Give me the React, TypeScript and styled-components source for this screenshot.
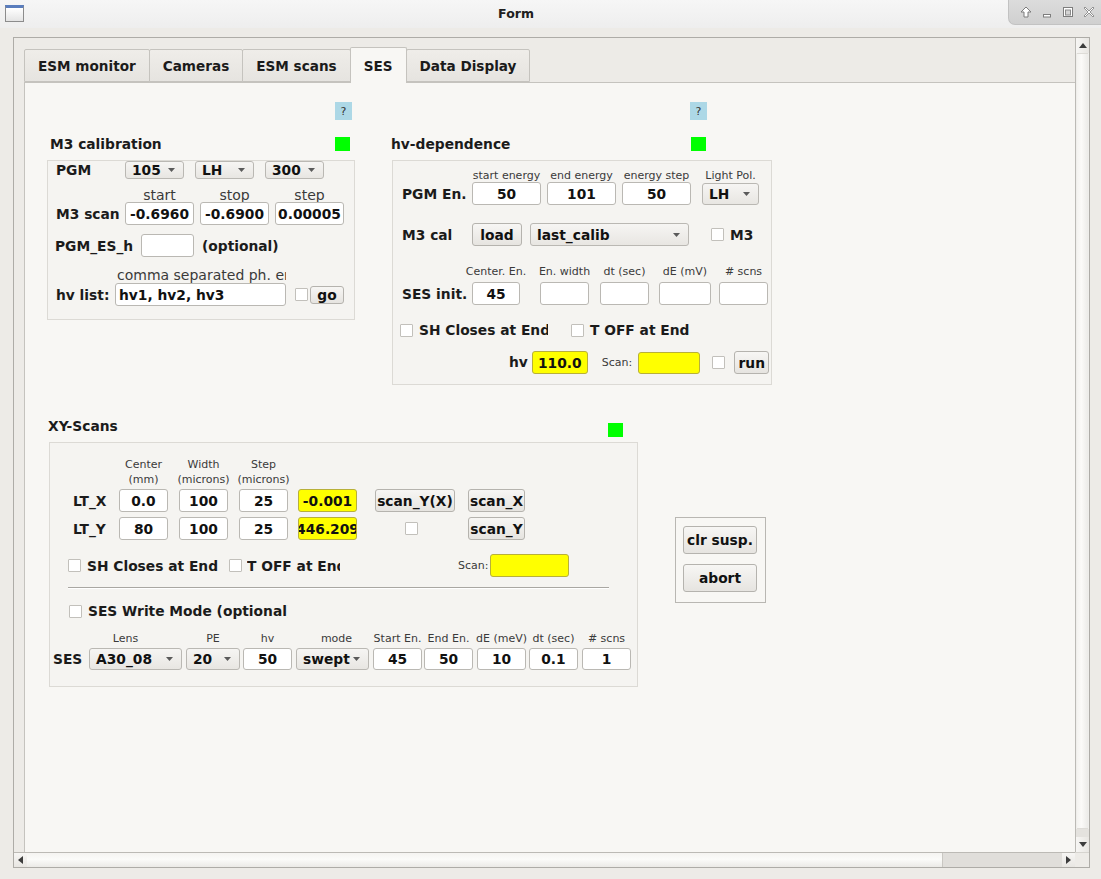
import React from "react";
import styled, { createGlobalStyle, css } from "styled-components";

const FONT = `"DejaVu Sans", "Liberation Sans", sans-serif`;

const Global = createGlobalStyle`
  html, body { margin: 0; padding: 0; background: #edebe7; }
  body { font-family: ${FONT}; color: #1b1b1b; }
  * { box-sizing: border-box; }
`;

type MLProps = { $ml?: number };
const ml = css<MLProps>`
  margin-left: ${(p) => (p.$ml ? `${p.$ml}px` : "0")};
`;

/* ---------- window chrome ---------- */
const Window = styled.div`
  width: 1101px;
  height: 879px;
  display: flex;
  flex-direction: column;
  background: #edebe7;
  overflow: hidden;
`;

const TitleBar = styled.div`
  height: 28px;
  flex: none;
  display: flex;
  align-items: flex-start;
  background: linear-gradient(#f6f6f6, #eeeeee);
`;

const AppIcon = styled.div`
  width: 19px;
  height: 17px;
  margin: 5px 0 0 5px;
  border: 1px solid #8c8c8c;
  border-top: 3px solid #5a7dbd;
  background: linear-gradient(#ffffff, #e4e4e4);
  flex: none;
`;

const Title = styled.div`
  flex: 1;
  text-align: center;
  font: bold 12.5px ${FONT};
  line-height: 28px;
  color: #202020;
`;

const WinButtons = styled.div`
  width: 93px;
  height: 25px;
  flex: none;
  display: flex;
  align-items: center;
  justify-content: space-around;
  padding: 0 2px 0 6px;
  background: linear-gradient(#dcdcdc, #d0d0d0);
  border-left: 1px solid #c2c2c2;
  border-bottom: 1px solid #c2c2c2;
  border-bottom-left-radius: 7px;
`;

const Body = styled.div`
  flex: 1;
  padding: 9px 11px 0 13px;
`;

const ScrollArea = styled.div`
  width: 1077px;
  height: 831px;
  border: 1px solid #aeaca7;
  display: grid;
  grid-template-columns: 1fr 14px;
  grid-template-rows: 1fr 15px;
  overflow: hidden;
`;

const Viewport = styled.div`
  overflow: hidden;
  padding: 9px 0 0 10px;
  background: #edebe7;
`;

const VScroll = styled.div`
  display: flex;
  flex-direction: column;
  border-left: 1px solid #bcbab5;
  background: #efeeeb;
`;

const HScroll = styled.div`
  display: flex;
  border-top: 1px solid #bcbab5;
  background: #e1dfdb;
`;

const Corner = styled.div`
  background: #edebe7;
  border-top: 1px solid #d6d4cf;
`;

const ArrowBtn = styled.div<{ $v?: boolean }>`
  flex: none;
  width: ${(p) => (p.$v ? "auto" : "13px")};
  height: ${(p) => (p.$v ? "15px" : "auto")};
  display: flex;
  align-items: center;
  justify-content: center;
  background: linear-gradient(${(p) => (p.$v ? "90deg" : "180deg")}, #f7f6f4, #e8e6e2);
`;

const VThumb = styled.div`
  flex: 1;
  margin: 0 1px;
  background: linear-gradient(90deg, #f4f3f0, #fbfaf8 40%, #ecebe8);
  border-top: 1px solid #dedcd7;
  border-bottom: 1px solid #dedcd7;
`;

const VTrack = styled.div`
  height: 8px;
  flex: none;
  background: #e4e2de;
`;

const HThumb = styled.div`
  width: 916px;
  flex: none;
  background: linear-gradient(#f5f4f1, #fbfbf9 45%, #ebeae6);
  border-right: 1px solid #c9c7c2;
`;

const HTrack = styled.div`
  flex: 1;
  background: #e0deda;
`;

/* ---------- tabs ---------- */
const TabBar = styled.div`
  display: flex;
  align-items: flex-end;
  height: 35px;
`;

const Tab = styled.div<{ $active?: boolean }>`
  height: ${(p) => (p.$active ? "36px" : "33px")};
  margin-left: -1px;
  margin-bottom: ${(p) => (p.$active ? "-1px" : "0")};
  padding: 0 13px;
  display: flex;
  align-items: center;
  font: bold 13.6px ${FONT};
  color: #1b1b1b;
  border: 1px solid #c5c3be;
  border-bottom: ${(p) => (p.$active ? "none" : "1px solid #c5c3be")};
  border-radius: 2px 2px 0 0;
  background: ${(p) => (p.$active ? "#f8f7f4" : "linear-gradient(#efede9, #e6e4e0)")};
  position: relative;
  z-index: ${(p) => (p.$active ? 1 : 0)};
  &:first-child { margin-left: 0; }
`;

const Panel = styled.div`
  width: 1100px;
  height: 820px;
  border: 1px solid #c5c3be;
  background: #f8f7f4;
`;

/* ---------- layout ---------- */
const TopSection = styled.div`
  display: flex;
  align-items: flex-start;
`;

const Col = styled.div<{ $ml: number; $w: number }>`
  margin-left: ${(p) => p.$ml}px;
  width: ${(p) => p.$w}px;
  display: flex;
  flex-direction: column;
  flex: none;
`;

const HelpRow = styled.div<{ $mt: number; $pr: number }>`
  margin-top: ${(p) => p.$mt}px;
  display: flex;
  justify-content: flex-end;
  padding-right: ${(p) => p.$pr}px;
`;

const HelpBtn = styled.div`
  width: 17px;
  height: 18px;
  background: #add8e6;
  font: 11px ${FONT};
  color: #333;
  display: flex;
  align-items: center;
  justify-content: center;
`;

const HeadRow = styled.div<{ $mt: number; $pl: number; $pr: number; $h: number }>`
  margin-top: ${(p) => p.$mt}px;
  height: ${(p) => p.$h}px;
  padding-left: ${(p) => p.$pl}px;
  padding-right: ${(p) => p.$pr}px;
  display: flex;
  justify-content: space-between;
  align-items: flex-start;
`;

const Heading = styled.div`
  font: bold 13.8px ${FONT};
  line-height: 14px;
  white-space: nowrap;
`;

const Led = styled.div<{ $end?: boolean }>`
  width: 15px;
  height: 14px;
  background: #00ff00;
  align-self: ${(p) => (p.$end ? "flex-end" : "flex-start")};
`;

const Box = styled.div<{ $mt: number; $ml?: number; $w: number; $h: number }>`
  margin-top: ${(p) => p.$mt}px;
  margin-left: ${(p) => p.$ml ?? 0}px;
  width: ${(p) => p.$w}px;
  height: ${(p) => p.$h}px;
  border: 1px solid #dcdad5;
  background: #f5f4f1;
  display: flex;
  flex-direction: column;
  flex: none;
`;

const BottomSection = styled.div`
  margin-top: 34px;
  display: flex;
  align-items: flex-start;
`;

const SideBox = styled.div`
  margin-left: 37px;
  margin-top: 98px;
  width: 91px;
  height: 86px;
  border: 1px solid #b9b7b2;
  padding: 8px 0 0 7px;
  display: flex;
  flex-direction: column;
  gap: 10px;
  flex: none;
`;

const Row = styled.div<{ $mt?: number; $pl?: number; $h: number; $top?: boolean }>`
  margin-top: ${(p) => p.$mt ?? 0}px;
  padding-left: ${(p) => p.$pl ?? 0}px;
  height: ${(p) => p.$h}px;
  display: flex;
  align-items: ${(p) => (p.$top ? "flex-start" : "center")};
  flex: none;
`;

const HLine = styled.div<{ $mt: number; $ml: number; $w: number }>`
  margin-top: ${(p) => p.$mt}px;
  margin-left: ${(p) => p.$ml}px;
  width: ${(p) => p.$w}px;
  height: 2px;
  border-top: 1px solid #a9a7a2;
  border-bottom: 1px solid #ffffff;
  flex: none;
`;

/* ---------- widgets ---------- */
const Label = styled.div<MLProps & { $w?: number; $clip?: boolean; $raise?: number }>`
  ${ml};
  width: ${(p) => (p.$w ? `${p.$w}px` : "auto")};
  flex: none;
  font: bold 13.8px ${FONT};
  line-height: 16px;
  margin-bottom: ${(p) => (p.$raise ? `${p.$raise * 2}px` : "0")};
  white-space: nowrap;
  overflow: ${(p) => (p.$clip ? "hidden" : "visible")};
  color: #1b1b1b;
`;

const Note = styled.div<MLProps & { $w?: number; $size?: number; $pl?: number }>`
  ${ml};
  width: ${(p) => (p.$w ? `${p.$w}px` : "auto")};
  padding-left: ${(p) => p.$pl ?? 0}px;
  flex: none;
  font: ${(p) => p.$size ?? 14}px ${FONT};
  line-height: 15px;
  white-space: nowrap;
  overflow: hidden;
  color: #3a3a3a;
`;

const Cell = styled.div<MLProps & { $w: number; $size?: number; $pl?: number; $pr?: number }>`
  ${ml};
  width: ${(p) => p.$w}px;
  padding-left: ${(p) => p.$pl ?? 0}px;
  padding-right: ${(p) => p.$pr ?? 0}px;
  flex: none;
  display: flex;
  flex-direction: column;
  align-items: center;
  font: ${(p) => p.$size ?? 11}px ${FONT};
  line-height: ${(p) => ((p.$size ?? 11) > 12 ? 14 : 15)}px;
  white-space: nowrap;
  color: #3a3a3a;
`;

const Field = styled.div<MLProps & { $w: number; $h?: number; $yellow?: boolean; $left?: boolean }>`
  ${ml};
  width: ${(p) => p.$w}px;
  height: ${(p) => p.$h ?? 23}px;
  flex: none;
  display: flex;
  align-items: center;
  justify-content: ${(p) => (p.$left ? "flex-start" : "center")};
  padding-left: ${(p) => (p.$left ? 3 : 0)}px;
  background: ${(p) => (p.$yellow ? "#ffff00" : "#ffffff")};
  border: 1px solid ${(p) => (p.$yellow ? "#b8b03a" : "#bab8b3")};
  border-radius: 3px;
  overflow: hidden;
  white-space: nowrap;
  font: bold 13.8px ${FONT};
  color: #111;
  & > span { flex: none; }
`;

const ComboBox = styled.div<MLProps & { $w: number; $h?: number }>`
  ${ml};
  width: ${(p) => p.$w}px;
  height: ${(p) => p.$h ?? 22}px;
  flex: none;
  display: flex;
  align-items: center;
  justify-content: space-between;
  padding: 0 8px 0 6px;
  background: linear-gradient(#f6f5f3, #e8e6e2);
  border: 1px solid #bab8b3;
  border-radius: 3px;
  font: bold 13.8px ${FONT};
  color: #111;
  white-space: nowrap;
`;

const Btn = styled.div<MLProps & { $w: number; $h?: number }>`
  ${ml};
  width: ${(p) => p.$w}px;
  height: ${(p) => p.$h ?? 23}px;
  flex: none;
  display: flex;
  align-items: center;
  justify-content: center;
  background: linear-gradient(#f7f6f4, #e6e4e0);
  border: 1px solid #b5b3ae;
  border-radius: 3px;
  font: bold 13.8px ${FONT};
  color: #111;
  white-space: nowrap;
`;

const Check = styled.div<MLProps>`
  ${ml};
  width: 13px;
  height: 13px;
  flex: none;
  background: #ffffff;
  border: 1px solid #c2c0bb;
  border-radius: 1px;
`;

const Arrow = () => (
  <svg width="7" height="4" viewBox="0 0 7 4">
    <path d="M0 0 L7 0 L3.5 4 Z" fill="#5a5a5a" />
  </svg>
);

const Combo = ({ children, ...rest }: { children: React.ReactNode; $w: number; $h?: number; $ml?: number }) => (
  <ComboBox {...rest}>
    <span>{children}</span>
    <Arrow />
  </ComboBox>
);

const Tri = ({ dir }: { dir: "up" | "down" | "left" | "right" }) => {
  const d = {
    up: "M0 5 L4 0 L8 5 Z",
    down: "M0 0 L8 0 L4 5 Z",
    left: "M5 0 L5 8 L0 4 Z",
    right: "M0 0 L5 4 L0 8 Z",
  }[dir];
  const v = dir === "up" || dir === "down";
  return (
    <svg width={v ? 8 : 5} height={v ? 5 : 8} viewBox={v ? "0 0 8 5" : "0 0 5 8"}>
      <path d={d} fill="#3c3c3c" />
    </svg>
  );
};

const WinIcon = ({ kind }: { kind: "up" | "min" | "max" | "close" }) => (
  <svg width="12" height="12" viewBox="0 0 12 12">
    {kind === "up" && (
      <path d="M6 1 L11 6 L8 6 L8 11 L4 11 L4 6 L1 6 Z" fill="#fff" stroke="#7d7d7d" strokeWidth="1" />
    )}
    {kind === "min" && <rect x="2.5" y="8.5" width="7" height="2.5" fill="#fff" stroke="#7d7d7d" />}
    {kind === "max" && (
      <g>
        <rect x="1.5" y="1.5" width="9" height="9" fill="#fff" stroke="#7d7d7d" />
        <rect x="3.5" y="4" width="5" height="5" fill="#d4d4d4" stroke="#8a8a8a" />
      </g>
    )}
    {kind === "close" && (
      <path d="M2 1 L6 5 L10 1 L11 2 L7 6 L11 10 L10 11 L6 7 L2 11 L1 10 L5 6 L1 2 Z" fill="#fff" stroke="#7d7d7d" strokeWidth="0.8" />
    )}
  </svg>
);

export default function App() {
  return (
    <>
      <Global />
      <Window>
        <TitleBar>
          <AppIcon />
          <Title>Form</Title>
          <WinButtons>
            <WinIcon kind="up" />
            <WinIcon kind="min" />
            <WinIcon kind="max" />
            <WinIcon kind="close" />
          </WinButtons>
        </TitleBar>
        <Body>
          <ScrollArea>
            <Viewport>
              <TabBar>
                <Tab>ESM monitor</Tab>
                <Tab>Cameras</Tab>
                <Tab>ESM scans</Tab>
                <Tab $active>SES</Tab>
                <Tab>Data Display</Tab>
              </TabBar>
              <Panel>
                <TopSection>
                  {/* M3 calibration */}
                  <Col $ml={22} $w={308}>
                    <HelpRow $mt={19} $pr={3}>
                      <HelpBtn>?</HelpBtn>
                    </HelpRow>
                    <HeadRow $mt={17} $h={14} $pl={3} $pr={5}>
                      <Heading>M3 calibration</Heading>
                      <Led />
                    </HeadRow>
                    <Box $mt={9} $w={308} $h={160}>
                      <Row $h={18} $pl={8}>
                        <Label $w={69}>PGM</Label>
                        <Combo $w={59} $h={18}>105</Combo>
                        <Combo $w={59} $h={18} $ml={11}>LH</Combo>
                        <Combo $w={59} $h={18} $ml={11}>300</Combo>
                      </Row>
                      <Row $mt={9} $h={14} $pl={77}>
                        <Cell $w={69} $size={14}>start</Cell>
                        <Cell $w={69} $size={14} $ml={6}>stop</Cell>
                        <Cell $w={69} $size={14} $ml={6}>step</Cell>
                      </Row>
                      <Row $h={23} $pl={8}>
                        <Label $w={69}>M3 scan</Label>
                        <Field $w={69}>-0.6960</Field>
                        <Field $w={69} $ml={6}>-0.6900</Field>
                        <Field $w={69} $ml={6}>0.00005</Field>
                      </Row>
                      <Row $mt={9} $h={23} $pl={7}>
                        <Label $w={86}>PGM_ES_h</Label>
                        <Field $w={53} />
                        <Label $ml={8}>(optional)</Label>
                      </Row>
                      <Row $mt={11} $h={14} $pl={67}>
                        <Note $w={171} $pl={2}>comma separated ph. energies</Note>
                      </Row>
                      <Row $mt={1} $h={23} $pl={8}>
                        <Label $w={59}>hv list:</Label>
                        <Field $w={171} $left>hv1, hv2, hv3</Field>
                        <Check $ml={9} />
                        <Btn $w={34} $h={18} $ml={2}>go</Btn>
                      </Row>
                    </Box>
                  </Col>

                  {/* hv-dependence */}
                  <Col $ml={36} $w={381}>
                    <HelpRow $mt={19} $pr={65}>
                      <HelpBtn>?</HelpBtn>
                    </HelpRow>
                    <HeadRow $mt={17} $h={14} $pl={0} $pr={66}>
                      <Heading>hv-dependence</Heading>
                      <Led />
                    </HeadRow>
                    <Box $mt={9} $ml={1} $w={380} $h={225}>
                      <Row $mt={7} $h={14} $pl={79}>
                        <Cell $w={69}>start energy</Cell>
                        <Cell $w={69} $ml={6}>end energy</Cell>
                        <Cell $w={69} $ml={6}>energy step</Cell>
                        <Cell $w={57} $ml={11}>Light Pol.</Cell>
                      </Row>
                      <Row $h={23} $pl={9}>
                        <Label $w={70}>PGM En.</Label>
                        <Field $w={69}>50</Field>
                        <Field $w={69} $ml={6}>101</Field>
                        <Field $w={69} $ml={6}>50</Field>
                        <Combo $w={57} $ml={11}>LH</Combo>
                      </Row>
                      <Row $mt={18} $h={23} $pl={9}>
                        <Label $w={70}>M3 cal</Label>
                        <Btn $w={50}>load</Btn>
                        <Combo $w={159} $h={23} $ml={8}>last_calib</Combo>
                        <Check $ml={22} />
                        <Label $ml={6}>M3</Label>
                      </Row>
                      <Row $mt={18} $h={14} $pl={79}>
                        <Cell $w={48}>Center. En.</Cell>
                        <Cell $w={49} $ml={20}>En. width</Cell>
                        <Cell $w={49} $ml={11}>dt (sec)</Cell>
                        <Cell $w={52} $ml={10}>dE (mV)</Cell>
                        <Cell $w={49} $ml={8}>
                          # scns
                        </Cell>
                      </Row>
                      <Row $mt={4} $h={23} $pl={9}>
                        <Label $w={70}>SES init.</Label>
                        <Field $w={48}>45</Field>
                        <Field $w={49} $ml={20} />
                        <Field $w={49} $ml={11} />
                        <Field $w={52} $ml={10} />
                        <Field $w={49} $ml={8} />
                      </Row>
                      <Row $mt={18} $h={14} $pl={7}>
                        <Check />
                        <Label $ml={6} $w={129} $clip>
                          SH Closes at End
                        </Label>
                        <Check $ml={23} />
                        <Label $ml={6}>T OFF at End</Label>
                      </Row>
                      <Row $mt={13} $h={25} $pl={116}>
                        <Label $raise={1}>hv</Label>
                        <Field $w={56} $ml={4} $yellow>
                          110.0
                        </Field>
                        <Note $ml={14} $size={11}>
                          Scan:
                        </Note>
                        <Field $w={62} $h={22} $ml={6} $yellow />
                        <Check $ml={12} />
                        <Btn $w={35} $ml={9}>
                          run
                        </Btn>
                      </Row>
                    </Box>
                  </Col>
                </TopSection>

                <BottomSection>
                  {/* XY-Scans */}
                  <Col $ml={23} $w={590}>
                    <HeadRow $mt={0} $h={18} $pl={0} $pr={15}>
                      <Heading>XY-Scans</Heading>
                      <Led $end />
                    </HeadRow>
                    <Box $mt={5} $ml={1} $w={589} $h={245}>
                      <Row $mt={14} $h={30} $pl={69} $top>
                        <Cell $w={49}>
                          <span>Center</span>
                          <span>(mm)</span>
                        </Cell>
                        <Cell $w={49} $ml={11}>
                          <span>Width</span>
                          <span>(microns)</span>
                        </Cell>
                        <Cell $w={49} $ml={11}>
                          <span>Step</span>
                          <span>(microns)</span>
                        </Cell>
                      </Row>
                      <Row $mt={2} $h={23} $pl={23}>
                        <Label $w={46}>LT_X</Label>
                        <Field $w={49}>0.0</Field>
                        <Field $w={49} $ml={11}>100</Field>
                        <Field $w={49} $ml={11}>25</Field>
                        <Field $w={59} $ml={10} $yellow>
                          <span>-0.001</span>
                        </Field>
                        <Btn $w={80} $ml={18}>scan_Y(X)</Btn>
                        <Btn $w={57} $ml={13}>scan_X</Btn>
                      </Row>
                      <Row $mt={5} $h={23} $pl={23}>
                        <Label $w={46}>LT_Y</Label>
                        <Field $w={49}>80</Field>
                        <Field $w={49} $ml={11}>100</Field>
                        <Field $w={49} $ml={11}>25</Field>
                        <Field $w={59} $ml={10} $yellow>
                          <span>446.209</span>
                        </Field>
                        <Check $ml={48} />
                        <Btn $w={57} $ml={50}>scan_Y</Btn>
                      </Row>
                      <Row $mt={14} $h={23} $pl={18}>
                        <Check />
                        <Label $ml={6} $w={131} $clip>
                          SH Closes at End
                        </Label>
                        <Check $ml={11} />
                        <Label $ml={5} $w={93} $clip>
                          T OFF at End
                        </Label>
                        <Note $ml={118} $size={11}>
                          Scan:
                        </Note>
                        <Field $w={79} $ml={2} $yellow />
                      </Row>
                      <HLine $mt={10} $ml={18} $w={541} />
                      <Row $mt={15} $h={14} $pl={19}>
                        <Check />
                        <Label $ml={6} $w={200} $clip>
                          SES Write Mode (optional)
                        </Label>
                      </Row>
                      <Row $mt={13} $h={14} $pl={39}>
                        <Cell $w={93} $pr={20}>Lens</Cell>
                        <Cell $w={54} $ml={4}>PE</Cell>
                        <Cell $w={49} $ml={3}>hv</Cell>
                        <Cell $w={73} $ml={4} $pl={8}>mode</Cell>
                        <Cell $w={49} $ml={4}>Start En.</Cell>
                        <Cell $w={49} $ml={2}>End En.</Cell>
                        <Cell $w={49} $ml={4}>dE (meV)</Cell>
                        <Cell $w={49} $ml={3}>dt (sec)</Cell>
                        <Cell $w={49} $ml={4}>
                          # scns
                        </Cell>
                      </Row>
                      <Row $mt={3} $h={22} $pl={3}>
                        <Label $w={36}>SES</Label>
                        <Combo $w={93}>A30_08</Combo>
                        <Combo $w={54} $ml={4}>20</Combo>
                        <Field $w={49} $h={22} $ml={3}>50</Field>
                        <Combo $w={73} $ml={4}>swept</Combo>
                        <Field $w={49} $h={22} $ml={4}>45</Field>
                        <Field $w={49} $h={22} $ml={2}>50</Field>
                        <Field $w={49} $h={22} $ml={4}>10</Field>
                        <Field $w={49} $h={22} $ml={3}>0.1</Field>
                        <Field $w={49} $h={22} $ml={4}>1</Field>
                      </Row>
                    </Box>
                  </Col>

                  <SideBox>
                    <Btn $w={74} $h={28}>clr susp.</Btn>
                    <Btn $w={74} $h={28}>abort</Btn>
                  </SideBox>
                </BottomSection>
              </Panel>
            </Viewport>
            <VScroll>
              <ArrowBtn $v>
                <Tri dir="up" />
              </ArrowBtn>
              <VThumb />
              <VTrack />
              <ArrowBtn $v>
                <Tri dir="down" />
              </ArrowBtn>
            </VScroll>
            <HScroll>
              <ArrowBtn>
                <Tri dir="left" />
              </ArrowBtn>
              <HThumb />
              <HTrack />
              <ArrowBtn>
                <Tri dir="right" />
              </ArrowBtn>
            </HScroll>
            <Corner />
          </ScrollArea>
        </Body>
      </Window>
    </>
  );
}
